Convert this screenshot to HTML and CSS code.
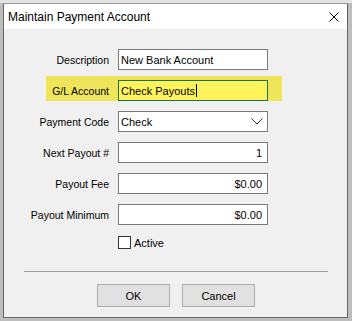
FILE: index.html
```html
<!DOCTYPE html>
<html>
<head>
<meta charset="utf-8">
<link rel="stylesheet" href="styles.css">
</head>
<body>
<div class="window">
  <div class="titlebar">
    <span class="title">Maintain Payment Account</span>
    <svg class="close" width="10" height="10" viewBox="0 0 10 10"><path d="M0.5 0.5 L9.5 9.5 M9.5 0.5 L0.5 9.5" stroke="#000" stroke-width="1" fill="none"/></svg>
  </div>
  <div class="body">
    <div class="form">
      <label class="lbl">Description</label>
      <div class="field">New Bank Account</div>

      <label class="lbl hl-label">G/L Account</label>
      <div class="field hl-field">Check Payouts<span class="caret"></span></div>

      <label class="lbl">Payment Code</label>
      <div class="field select">Check
        <svg class="chev" width="12" height="7" viewBox="0 0 12 7"><path d="M0.5 0.5 L6 6 L11.5 0.5" stroke="#333" stroke-width="1" fill="none"/></svg>
      </div>

      <label class="lbl">Next Payout #</label>
      <div class="field num">1</div>

      <label class="lbl">Payout Fee</label>
      <div class="field num">$0.00</div>

      <label class="lbl">Payout Minimum</label>
      <div class="field num">$0.00</div>

      <span></span>
      <div class="check"><span class="box"></span>Active</div>
    </div>
    <div class="sep"></div>
    <div class="buttons">
      <div class="btn">OK</div>
      <div class="btn">Cancel</div>
    </div>
  </div>
</div>
</body>
</html>
```
FILE: styles.css
```css
html, body {
  margin: 0;
  padding: 0;
}
body {
  width: 352px;
  height: 321px;
  background: #bdbdbd;
  font-family: "Liberation Sans", Arial, sans-serif;
  font-size: 10.5px;
  color: #000;
  overflow: hidden;
  border-top: 3px solid #e4e4e4;
  box-sizing: border-box;
}
.window {
  margin-left: 3px;
  width: 345px;
  height: 315px;
  box-sizing: border-box;
  border: 1px solid #646464;
  border-top-color: #9a9a9a;
  background: #f0f0f0;
  display: flex;
  flex-direction: column;
}
.titlebar {
  height: 25px;
  background: #fff;
  display: flex;
  align-items: center;
  justify-content: space-between;
  padding: 0 8px 0 4px;
}
.title {
  font-size: 12px;
}
.close {
  display: block;
}
.body {
  flex: 1;
  display: flex;
  flex-direction: column;
}
.form {
  display: grid;
  grid-template-columns: 105px 150px;
  grid-template-rows: repeat(6, 21px) 14px;
  column-gap: 9px;
  row-gap: 10px;
  padding-top: 20px;
  position: relative;
  z-index: 0;
}
.lbl {
  display: flex;
  align-items: center;
  justify-content: flex-end;
  white-space: nowrap;
}
.field {
  box-sizing: border-box;
  border: 1px solid #7a7a7a;
  background: #fff;
  display: flex;
  align-items: center;
  padding: 0 3px 0 2px;
  white-space: nowrap;
  font-size: 11px;
}
.hl-label {
  position: relative;
}
.hl-label::before {
  content: "";
  position: absolute;
  left: 42px;
  top: -4px;
  width: 236px;
  height: 25px;
  background: #efe55b;
  z-index: -1;
}
.hl-field {
  background: #fff35c;
  border-color: #17744a;
}
.caret {
  display: inline-block;
  width: 1px;
  height: 13px;
  background: #000;
  margin-left: 1px;
}
.select {
  justify-content: space-between;
  padding-right: 4px;
}
.chev {
  display: block;
}
.num {
  justify-content: flex-end;
  padding-right: 5px;
}
.check {
  display: flex;
  align-items: center;
  align-self: start;
  height: 13px;
  margin-top: 1px;
  font-size: 11px;
}
.box {
  width: 13px;
  height: 13px;
  box-sizing: border-box;
  border: 1px solid #333;
  background: #fff;
  margin-right: 3px;
}
.sep {
  margin: 22px 0 0 20px;
  width: 304px;
  height: 1px;
  background: #a0a0a0;
}
.buttons {
  display: flex;
  gap: 12px;
  padding-left: 93px;
  margin-top: 12px;
}
.btn {
  width: 73px;
  height: 23px;
  box-sizing: border-box;
  border: 1px solid #adadad;
  background: #e1e1e1;
  display: flex;
  align-items: center;
  justify-content: center;
  font-size: 11px;
}
```
